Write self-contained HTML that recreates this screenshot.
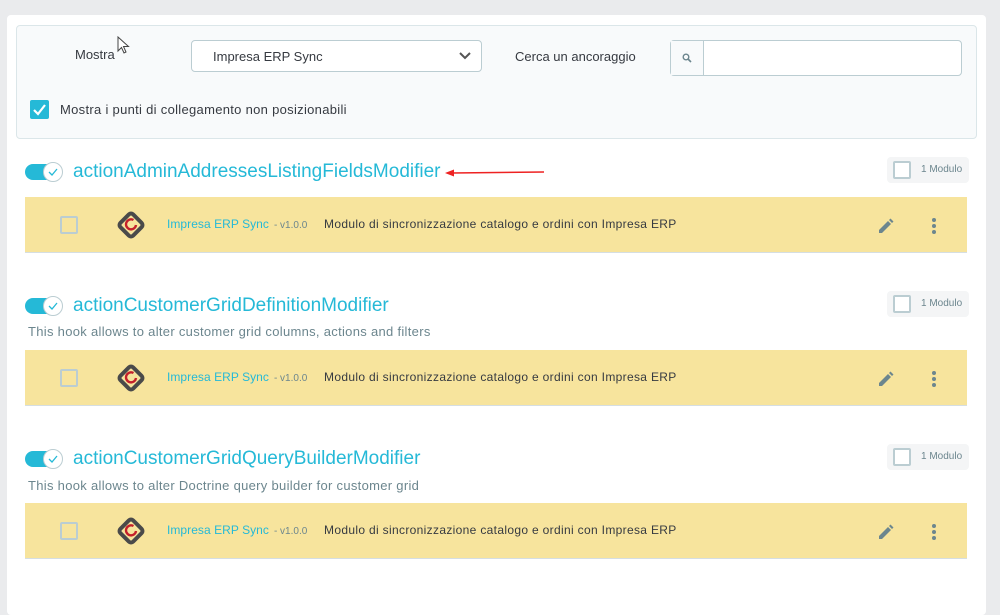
<!DOCTYPE html>
<html><head><meta charset="utf-8"><style>
*{box-sizing:border-box;margin:0;padding:0}
body{width:1000px;height:577px;overflow:hidden;background:#eaebed;font-family:"Liberation Sans",sans-serif;position:relative;color:#363a41}
.card{position:absolute;left:7px;top:15px;width:979px;height:600px;background:#fff;border-radius:4px}
.filter{position:absolute;left:16px;top:25px;width:961px;height:114px;background:#f8fafb;border:1px solid #dbe6e9;border-radius:4px}
.abs{position:absolute}
.lbl{font-size:13px;color:#363a41}
.sel{left:191px;top:40px;width:291px;height:32px;border:1px solid #bbcdd2;border-radius:4px;background:#fff;font-size:13px;padding:8px 0 0 21px}
.srch{left:670px;top:40px;width:292px;height:36px;border:1px solid #bbcdd2;border-radius:4px;background:#fff}
.srch .ic{position:absolute;left:0;top:0;width:33px;height:34px;border-right:1px solid #bbcdd2;background:#f8fafb}
.cb{left:30px;top:100px;width:19px;height:19px;background:#25b9d7;border-radius:2px}
.tog{width:38px;height:20px}
.title{font-size:19px;color:#25b9d7;letter-spacing:0}
.desc{font-size:13px;color:#6c868e;letter-spacing:0.3px}
.badge{width:82px;height:26px;background:#f4f5f6;border-radius:4px}
.badge i{position:absolute;left:6px;top:4px;width:18px;height:18px;border:2px solid #bbcdd2;border-radius:2px;background:#fff}
.badge span{position:absolute;left:34px;top:7px;font-size:10px;color:#6c868e}
.band{left:25px;width:942px;height:56px;background:#f7e49d;border-bottom:1px solid #d5dee2}
.band .c{position:absolute;left:35px;top:19px;width:18px;height:18px;border:2px solid #bbcdd2;border-radius:2px}
.band .nm{position:absolute;left:142px;top:20px;font-size:12px;color:#25b9d7;letter-spacing:0.05px}
.band .v{font-size:10px;color:#6c868e;margin-left:5px;letter-spacing:0}
.band .d{position:absolute;left:299px;top:20px;font-size:12px;color:#363a41;letter-spacing:0.33px}
</style></head><body>
<div class="card"></div>
<div class="filter"></div>
<div class="abs lbl" style="left:75px;top:47px">Mostra</div>
<svg class="abs" style="left:117px;top:36px" width="14" height="20" viewBox="0 0 14 20"><path d="M1 1 L1 15 L4.5 11.5 L7 17 L9 16 L6.5 10.5 L11.5 10.5 Z" fill="#fff" stroke="#444" stroke-width="1"/></svg>
<div class="abs sel">Impresa ERP Sync<svg style="position:absolute;right:10px;top:11px" width="12" height="8" viewBox="0 0 12 8"><path d="M1 1 L6 6 L11 1" stroke="#555" stroke-width="2" fill="none"/></svg></div>
<div class="abs lbl" style="left:515px;top:49px">Cerca un ancoraggio</div>
<div class="abs srch"><div class="ic"><svg style="position:absolute;left:11px;top:12px" width="10" height="10" viewBox="0 0 10 10"><circle cx="4" cy="4" r="2.8" stroke="#6c868e" stroke-width="1.4" fill="none"/><path d="M6 6 L9 9" stroke="#6c868e" stroke-width="1.6"/></svg></div></div>
<div class="abs cb"><svg width="19" height="19" viewBox="0 0 19 19"><path d="M4 10 L8 14 L15 5" stroke="#fff" stroke-width="2.2" fill="none"/></svg></div>
<div class="abs lbl" style="left:60px;top:102px;letter-spacing:0.3px">Mostra i punti di collegamento non posizionabili</div>

<svg class="abs tog" style="left:25px;top:162px" viewBox="0 0 38 20"><rect x="0" y="2" width="36" height="16" rx="8" fill="#25b9d7"/><circle cx="28" cy="10" r="9.5" fill="#fff" stroke="#bbcdd2"/><path d="M24 10 L27 13 L32 7" stroke="#25b9d7" stroke-width="1.3" fill="none"/></svg>
<div class="abs title" style="left:73px;top:161px">actionAdminAddressesListingFieldsModifier</div>
<svg class="abs" style="left:444px;top:168px" width="102" height="10" viewBox="0 0 102 10"><path d="M8 5 L100 4" stroke="#e22" stroke-width="1.5"/><path d="M1 5 L10 1.5 L10 8.5 Z" fill="#e22"/></svg>
<div class="abs badge" style="left:887px;top:157px"><i></i><span>1 Modulo</span></div>
<div class="abs band" style="top:197px"><div class="c"></div>
<svg style="position:absolute;left:91px;top:13px" width="30" height="30" viewBox="0 0 30 30"><rect x="6" y="6" width="18" height="18" rx="3" transform="rotate(45 15 15)" fill="none" stroke="#4a4a4a" stroke-width="4"/><path d="M17.5 10 A5 5 0 1 0 20 15" fill="none" stroke="#c4202b" stroke-width="2.4"/></svg>
<div class="nm">Impresa ERP Sync<span class="v">- v1.0.0</span></div><div class="d">Modulo di sincronizzazione catalogo e ordini con Impresa ERP</div>
<svg style="position:absolute;left:853px;top:21px" width="16" height="16" viewBox="0 0 16 16"><path d="M1 15 L1 12 L10 3 L13 6 L4 15 Z M11 2 L12.5 0.5 L15.5 3.5 L14 5 Z" fill="#6c868e"/></svg>
<svg style="position:absolute;left:906px;top:20px" width="6" height="18" viewBox="0 0 6 18"><circle cx="3" cy="3" r="2" fill="#6c868e"/><circle cx="3" cy="9" r="2" fill="#6c868e"/><circle cx="3" cy="15" r="2" fill="#6c868e"/></svg></div>

<svg class="abs tog" style="left:25px;top:296px" viewBox="0 0 38 20"><rect x="0" y="2" width="36" height="16" rx="8" fill="#25b9d7"/><circle cx="28" cy="10" r="9.5" fill="#fff" stroke="#bbcdd2"/><path d="M24 10 L27 13 L32 7" stroke="#25b9d7" stroke-width="1.3" fill="none"/></svg>
<div class="abs title" style="left:73px;top:295px">actionCustomerGridDefinitionModifier</div>
<div class="abs desc" style="left:28px;top:324px">This hook allows to alter customer grid columns, actions and filters</div>
<div class="abs badge" style="left:887px;top:291px"><i></i><span>1 Modulo</span></div>
<div class="abs band" style="top:350px"><div class="c"></div>
<svg style="position:absolute;left:91px;top:13px" width="30" height="30" viewBox="0 0 30 30"><rect x="6" y="6" width="18" height="18" rx="3" transform="rotate(45 15 15)" fill="none" stroke="#4a4a4a" stroke-width="4"/><path d="M17.5 10 A5 5 0 1 0 20 15" fill="none" stroke="#c4202b" stroke-width="2.4"/></svg>
<div class="nm">Impresa ERP Sync<span class="v">- v1.0.0</span></div><div class="d">Modulo di sincronizzazione catalogo e ordini con Impresa ERP</div>
<svg style="position:absolute;left:853px;top:21px" width="16" height="16" viewBox="0 0 16 16"><path d="M1 15 L1 12 L10 3 L13 6 L4 15 Z M11 2 L12.5 0.5 L15.5 3.5 L14 5 Z" fill="#6c868e"/></svg>
<svg style="position:absolute;left:906px;top:20px" width="6" height="18" viewBox="0 0 6 18"><circle cx="3" cy="3" r="2" fill="#6c868e"/><circle cx="3" cy="9" r="2" fill="#6c868e"/><circle cx="3" cy="15" r="2" fill="#6c868e"/></svg></div>

<svg class="abs tog" style="left:25px;top:449px" viewBox="0 0 38 20"><rect x="0" y="2" width="36" height="16" rx="8" fill="#25b9d7"/><circle cx="28" cy="10" r="9.5" fill="#fff" stroke="#bbcdd2"/><path d="M24 10 L27 13 L32 7" stroke="#25b9d7" stroke-width="1.3" fill="none"/></svg>
<div class="abs title" style="left:73px;top:448px">actionCustomerGridQueryBuilderModifier</div>
<div class="abs desc" style="left:28px;top:478px">This hook allows to alter Doctrine query builder for customer grid</div>
<div class="abs badge" style="left:887px;top:444px"><i></i><span>1 Modulo</span></div>
<div class="abs band" style="top:503px"><div class="c"></div>
<svg style="position:absolute;left:91px;top:13px" width="30" height="30" viewBox="0 0 30 30"><rect x="6" y="6" width="18" height="18" rx="3" transform="rotate(45 15 15)" fill="none" stroke="#4a4a4a" stroke-width="4"/><path d="M17.5 10 A5 5 0 1 0 20 15" fill="none" stroke="#c4202b" stroke-width="2.4"/></svg>
<div class="nm">Impresa ERP Sync<span class="v">- v1.0.0</span></div><div class="d">Modulo di sincronizzazione catalogo e ordini con Impresa ERP</div>
<svg style="position:absolute;left:853px;top:21px" width="16" height="16" viewBox="0 0 16 16"><path d="M1 15 L1 12 L10 3 L13 6 L4 15 Z M11 2 L12.5 0.5 L15.5 3.5 L14 5 Z" fill="#6c868e"/></svg>
<svg style="position:absolute;left:906px;top:20px" width="6" height="18" viewBox="0 0 6 18"><circle cx="3" cy="3" r="2" fill="#6c868e"/><circle cx="3" cy="9" r="2" fill="#6c868e"/><circle cx="3" cy="15" r="2" fill="#6c868e"/></svg></div>
</body></html>
